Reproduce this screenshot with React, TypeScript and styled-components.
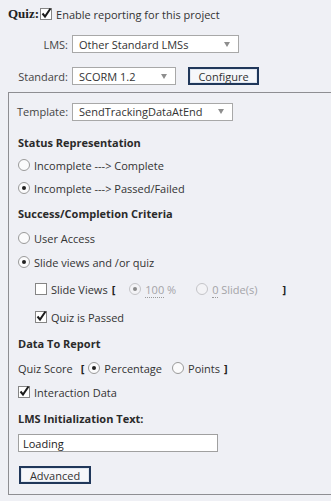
import React from "react";
import styled, { createGlobalStyle } from "styled-components";

const Global = createGlobalStyle`
  html, body {
    margin: 0;
    padding: 0;
    background: #eff0f5;
    overflow: hidden;
  }
  body {
    font-family: "Open Sans", "Noto Sans", "Liberation Sans", sans-serif;
    font-size: 11px;
    color: #333;
  }
`;

const Page = styled.div`
  width: 331px;
  height: 501px;
  padding: 4px 0 0 8px;
  box-sizing: border-box;
  overflow: hidden;
`;

const Row = styled.div<{ $mt?: number; $ml?: number; $h?: number }>`
  display: flex;
  align-items: center;
  height: ${(p) => p.$h ?? 20}px;
  margin-top: ${(p) => p.$mt ?? 0}px;
  margin-left: ${(p) => p.$ml ?? 0}px;
  white-space: nowrap;
`;

const QuizLabel = styled.span`
  font-family: "Liberation Serif", serif;
  font-weight: bold;
  font-size: 13px;
  color: #222;
  margin-right: 1px;
`;

const FieldLabel = styled.span<{ $w?: number }>`
  width: ${(p) => (p.$w ? `${p.$w}px` : "auto")};
  text-align: right;
  margin-right: 4px;
  color: #444;
`;

const SelectBox = styled.div<{ $w: number }>`
  width: ${(p) => p.$w}px;
  height: 18px;
  box-sizing: border-box;
  background: #fff;
  border: 1px solid #a8a8a8;
  display: flex;
  align-items: center;
  padding: 0 8px 0 6px;
  color: #333;
`;

const SelectText = styled.span`
  flex: 1;
`;

const Arrow = styled.span`
  width: 0;
  height: 0;
  border-left: 3px solid transparent;
  border-right: 3px solid transparent;
  border-top: 5px solid #8e8e8e;
`;

const Button = styled.div<{ $w: number; $ml?: number }>`
  width: ${(p) => p.$w}px;
  height: 18px;
  margin-left: ${(p) => p.$ml ?? 0}px;
  box-sizing: border-box;
  border: 2px solid #20375a;
  background: #f6f7fa;
  box-shadow: inset 0 0 0 1px #dfe6f0;
  display: flex;
  align-items: center;
  justify-content: center;
  color: #333;
`;

const Panel = styled.div`
  margin-top: 7px;
  margin-right: -20px;
  border: 1px solid #8e8e92;
  padding: 9px 0 10px 9px;
`;

const Header = styled.div<{ $mt: number }>`
  height: 20px;
  margin-top: ${(p) => p.$mt}px;
  display: flex;
  align-items: center;
  font-weight: bold;
  color: #2a2a2a;
`;

const Box = styled.span`
  width: 12px;
  height: 12px;
  box-sizing: border-box;
  border: 1px solid #858585;
  background: #fff;
  margin-right: 4px;
  position: relative;
  flex: none;
`;

const Dot = styled.span<{ $on?: boolean; $dim?: boolean }>`
  width: 12px;
  height: 12px;
  box-sizing: border-box;
  border-radius: 50%;
  border: 1px solid ${(p) => (p.$dim ? "#c4c4c8" : "#9a9a9a")};
  background: ${(p) => (p.$dim ? "#f3f3f6" : "#fbfbfc")};
  margin-right: 4px;
  display: flex;
  align-items: center;
  justify-content: center;
  flex: none;
  &::after {
    content: "";
    display: ${(p) => (p.$on ? "block" : "none")};
    width: 4px;
    height: 4px;
    border-radius: 50%;
    background: ${(p) => (p.$dim ? "#8a8a8a" : "#222")};
  }
`;

const Dim = styled.span`
  color: #a4a4a8;
`;

const Key = styled.span`
  border-bottom: 1px dotted #9a9a9a;
  line-height: 11px;
`;

const Bracket = styled.span<{ $ml?: number; $mr?: number }>`
  font-weight: bold;
  color: #222;
  margin-left: ${(p) => p.$ml ?? 0}px;
  margin-right: ${(p) => p.$mr ?? 0}px;
`;

const Spacer = styled.span<{ $w: number }>`
  width: ${(p) => p.$w}px;
  flex: none;
`;

const TextInput = styled.div`
  width: 200px;
  height: 18px;
  box-sizing: border-box;
  background: #fff;
  border: 1px solid #a0a0a0;
  padding: 0 4px;
  display: flex;
  align-items: center;
  color: #222;
`;

const Check = ({ on }: { on?: boolean }) => (
  <Box>
    {on && (
      <svg width="12" height="12" viewBox="0 0 12 12" style={{ position: "absolute", left: -1, top: -2 }}>
        <path d="M2.5 6.5 L5 9.5 L10.5 1.5" fill="none" stroke="#1c1c1c" strokeWidth="2" />
      </svg>
    )}
  </Box>
);

const Select = ({ w, value }: { w: number; value: string }) => (
  <SelectBox $w={w}>
    <SelectText>{value}</SelectText>
    <Arrow />
  </SelectBox>
);

export default function App() {
  return (
    <Page>
      <Global />
      <Row>
        <QuizLabel>Quiz:</QuizLabel>
        <Check on />
        <span>Enable reporting for this project</span>
      </Row>
      <Row $mt={11} $h={18}>
        <FieldLabel $w={60}>LMS:</FieldLabel>
        <Select w={167} value="Other Standard LMSs" />
      </Row>
      <Row $mt={14} $h={18}>
        <FieldLabel $w={60}>Standard:</FieldLabel>
        <Select w={104} value="SCORM 1.2" />
        <Button $w={71} $ml={12}>Configure</Button>
      </Row>
      <Panel>
        <Row $h={19} $ml={-1}>
          <FieldLabel>Template:</FieldLabel>
          <Select w={161} value="SendTrackingDataAtEnd" />
        </Row>
        <Header $mt={11}>Status Representation</Header>
        <Row $mt={3}>
          <Dot />
          Incomplete ---&gt; Complete
        </Row>
        <Row $mt={3}>
          <Dot $on />
          Incomplete ---&gt; Passed/Failed
        </Row>
        <Header $mt={5}>Success/Completion Criteria</Header>
        <Row $mt={5}>
          <Dot />
          User Access
        </Row>
        <Row $mt={4}>
          <Dot $on />
          Slide views and /or quiz
        </Row>
        <Row $mt={7} $ml={17}>
          <Check />
          Slide Views
          <Bracket $ml={4} $mr={14}>[</Bracket>
          <Dot $on $dim />
          <Dim>
            <Key>100</Key> %
          </Dim>
          <Spacer $w={20} />
          <Dot $dim />
          <Dim>
            <Key>0</Key> Slide(s)
          </Dim>
          <Bracket $ml={25}>]</Bracket>
        </Row>
        <Row $mt={8} $ml={17}>
          <Check on />
          Quiz is Passed
        </Row>
        <Header $mt={6}>Data To Report</Header>
        <Row $mt={5}>
          Quiz Score
          <Bracket $ml={8} $mr={4}>[</Bracket>
          <Dot $on />
          Percentage
          <Spacer $w={10} />
          <Dot />
          Points
          <Bracket $ml={4}>]</Bracket>
        </Row>
        <Row $mt={4}>
          <Check on />
          Interaction Data
        </Row>
        <Header $mt={6}>LMS Initialization Text:</Header>
        <Row $mt={6} $h={18}>
          <TextInput>Loading</TextInput>
        </Row>
        <Row $mt={14} $h={18} $ml={1}>
          <Button $w={72}>Advanced</Button>
        </Row>
      </Panel>
    </Page>
  );
}
